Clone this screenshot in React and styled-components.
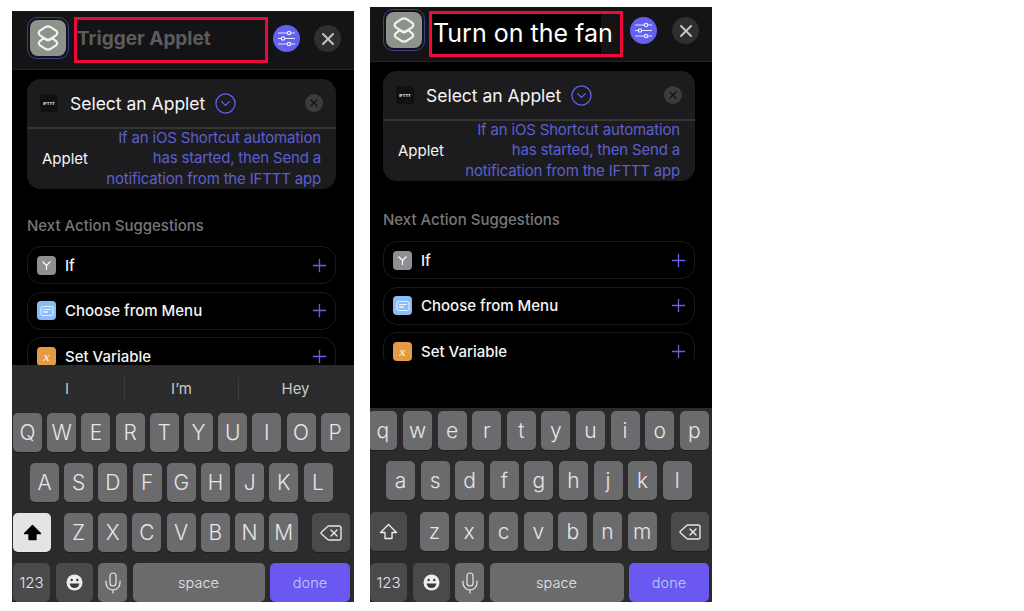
import styled, { createGlobalStyle } from "styled-components"
import { CircleChevronDown, Delete, Mic, Plus, X } from "lucide-react"

const GlobalStyle = createGlobalStyle`
    html, body {
        margin: 0;
        padding: 0;
        background: #fff;
        font-family: Inter, "Liberation Sans", sans-serif;
    }
`

const colors = {
    accent: "#6361ec",
    link: "#5d5fd0",
    header: "#141416",
    card: "#1c1c1e",
    keyboard: "#2b2b2d",
    key: "#6b6b6d",
    keyDark: "#4a4a4c",
}

const Page = styled.div`
    display: flex;
    align-items: flex-start;
    width: 1024px;
    height: 611px;
    overflow: hidden;
    padding-left: 12px;
    box-sizing: border-box;
`

const Phone = styled.div`
    display: flex;
    flex-direction: column;
    flex: none;
    width: 342px;
    height: ${(p) => p.$height}px;
    margin-top: ${(p) => p.$top}px;
    margin-left: ${(p) => p.$left}px;
    background: #000;
    overflow: hidden;
`

const Header = styled.div`
    display: flex;
    align-items: center;
    flex: none;
    height: ${(p) => p.$height}px;
    padding-left: ${(p) => p.$pad}px;
    background: ${colors.header};
    border-bottom: 1px solid #232325;
    box-sizing: border-box;
`

const AppIcon = styled.div`
    display: flex;
    align-items: center;
    justify-content: center;
    flex: none;
    width: 42px;
    height: 42px;
    margin-top: ${(p) => p.$shift}px;
    border: 1px solid #3f3f8f;
    border-radius: 10px;
    box-sizing: border-box;
    padding: 2px;
`

const AppIconFace = styled.div`
    display: flex;
    align-items: center;
    justify-content: center;
    width: 100%;
    height: 100%;
    background: #8d928b;
    border-radius: 8px;
`

const TitleBox = styled.div`
    display: flex;
    align-items: center;
    flex: none;
    width: 194px;
    height: 46px;
    margin-left: ${(p) => p.$gap}px;
    padding-left: ${(p) => (p.$filled ? 1 : 0)}px;
    padding-bottom: ${(p) => (p.$filled ? 2 : 4)}px;
    border: 3.5px solid #ee0a3c;
    box-sizing: border-box;
    background: ${(p) => (p.$filled ? "linear-gradient(90deg, #000 169px, #141416 169px)" : "#141416")};
    color: ${(p) => (p.$filled ? "#fff" : "#5c5c5f")};
    font-size: ${(p) => (p.$filled ? 25 : 19)}px;
    font-weight: ${(p) => (p.$filled ? 400 : 700)};
    white-space: nowrap;
`

const RoundButton = styled.div`
    display: flex;
    align-items: center;
    justify-content: center;
    flex: none;
    width: 27px;
    height: 27px;
    margin-left: ${(p) => p.$gap}px;
    margin-top: ${(p) => p.$shift}px;
    border-radius: 50%;
    background: ${(p) => (p.$primary ? "#6461f0" : "#2f2f31")};
    color: #c5c5c5;
`

const Content = styled.div`
    flex: none;
    height: ${(p) => p.$height}px;
    padding: 9px ${(p) => p.$right}px 0 ${(p) => p.$left}px;
    box-sizing: border-box;
    overflow: hidden;
`

const Filler = styled.div`
    flex: 1;
`

const Card = styled.div`
    height: 110px;
    background: ${colors.card};
    border-radius: 14px;
    overflow: hidden;
`

const CardTop = styled.div`
    display: flex;
    align-items: center;
    height: 50px;
    padding: 0 13px;
    box-sizing: border-box;
    border-bottom: 2px solid #363638;
`

const IftttBadge = styled.div`
    display: flex;
    align-items: center;
    justify-content: center;
    flex: none;
    width: 18px;
    height: 18px;
    border-radius: 3px;
    background: #111;
    color: #e8e8e8;
    font-size: 4px;
    font-weight: 800;
`

const CardTitle = styled.span`
    margin: 0 9px 0 12px;
    color: #f5f5f5;
    font-size: 17.5px;
`

const ClearButton = styled.div`
    display: flex;
    align-items: center;
    justify-content: center;
    width: 18px;
    height: 18px;
    margin-left: auto;
    border-radius: 50%;
    background: #3c3c3e;
    color: #141414;
`

const CardBody = styled.div`
    display: flex;
    align-items: center;
    justify-content: space-between;
    padding: 0 15px 0 15px;
    height: 59px;
`

const FieldLabel = styled.span`
    color: #f5f5f5;
    font-size: 15px;
`

const FieldValue = styled.div`
    color: ${colors.link};
    font-size: 15px;
    letter-spacing: -0.18px;
    line-height: 20.5px;
    text-align: right;
    white-space: nowrap;
`

const SectionLabel = styled.div`
    margin: ${(p) => p.$gap}px 0 ${(p) => p.$below}px;
    color: #77777b;
    font-size: 15px;
    font-weight: 500;
    line-height: 18px;
`

const Row = styled.div`
    display: flex;
    align-items: center;
    height: 38px;
    margin-bottom: 7.6px;
    padding: 0 5px 0 9px;
    border: 1px solid #1b1b1d;
    border-radius: 14px;
    color: #f5f5f5;
    font-size: 15px;
    font-weight: 500;
    box-sizing: border-box;
`

const RowIcon = styled.div`
    display: flex;
    align-items: center;
    justify-content: center;
    flex: none;
    width: 19px;
    height: 19px;
    margin-right: 9px;
    border-radius: 4px;
    background: ${(p) => p.$color};
    color: #fff;
`

const VarGlyph = styled.span`
    font-family: "Liberation Serif", serif;
    font-style: italic;
    font-weight: 700;
    font-size: 13px;
    line-height: 1;
    color: #fbe7c8;
`

const RowPlus = styled.div`
    display: flex;
    margin-left: auto;
    color: ${colors.accent};
`

const Keyboard = styled.div`
    display: flex;
    flex: none;
    flex-direction: column;
    height: ${(p) => p.$height}px;
    background: ${colors.keyboard};
`

const Suggestions = styled.div`
    display: flex;
    align-items: flex-end;
    height: 35px;
    margin: 0 0 13px -2px;
`

const Suggestion = styled.div`
    flex: none;
    width: 114px;
    height: 23px;
    box-sizing: border-box;
    color: #c9c9c9;
    font-size: 15px;
    line-height: 23px;
    text-align: center;
    & + & {
        border-left: 1px solid #3c3c3e;
    }
`

const KeyRow = styled.div`
    display: flex;
    gap: ${(p) => p.$gap}px;
    height: 39px;
    margin-left: ${(p) => p.$left}px;
    margin-top: ${(p) => p.$top || 0}px;
`

const LetterGroup = styled.div`
    display: flex;
    gap: ${(p) => p.$gap}px;
    margin: 0 ${(p) => p.$right}px 0 ${(p) => p.$left}px;
`

const Key = styled.div`
    display: flex;
    align-items: center;
    justify-content: center;
    flex: none;
    width: ${(p) => p.$width || 29}px;
    height: 39px;
    border-radius: 5px;
    background: ${(p) => p.$bg || colors.key};
    color: ${(p) => p.$fg || "#e6e6e6"};
    font-size: ${(p) => p.$size || 21}px;
    font-weight: 300;
    box-shadow: 0 1px 0 rgba(0, 0, 0, 0.3);
`

const LayersIcon = () => (
    <svg width="30" height="30" viewBox="0 0 30 30" fill="none" stroke="#f2f2f2" strokeWidth="2.2" strokeLinejoin="round">
        <path d="M15 17.5 L19.6 15.3 L23.2 18.3 C24.6 19.6 24.6 21 23 22.3 L18 25.6 C16 26.9 14 26.9 12 25.6 L7 22.3 C5.4 21 5.4 19.6 6.8 18.3 L10.4 15.3 Z" />
        <path d="M12 4.4 C14 3.1 16 3.1 18 4.4 L23 7.7 C24.8 9 24.8 11 23 12.3 L18 15.6 C16 16.9 14 16.9 12 15.6 L7 12.3 C5.2 11 5.2 9 7 7.7 Z" />
    </svg>
)

const SlidersIcon = () => (
    <svg width="19" height="17" viewBox="0 0 19 17" fill="none" stroke="#e8e8ff" strokeWidth="1.2">
        <path d="M1 3 H18 M1 8.5 H18 M1 14 H18" />
        <circle cx="12" cy="3" r="1.7" fill="#6461f0" />
        <circle cx="6" cy="8.5" r="1.7" fill="#6461f0" />
        <circle cx="12" cy="14" r="1.7" fill="#6461f0" />
    </svg>
)

const BranchIcon = () => (
    <svg width="13" height="13" viewBox="0 0 13 13" fill="none" stroke="#fff" strokeWidth="1.2">
        <path d="M2.5 2.5 L6.5 6.5 L10.5 2.5 M6.5 6.5 V11" />
    </svg>
)

const MenuIcon = () => (
    <svg width="14" height="12" viewBox="0 0 14 12" fill="none" stroke="#e6f1ff" strokeWidth="1">
        <rect x="1" y="1.5" width="12" height="9" rx="1.5" />
        <path d="M3 4.5 H11" />
        <path d="M3 7 H8" strokeWidth="1.6" />
    </svg>
)

const ShiftIcon = ({ filled }) => (
    <svg width="19" height="17" viewBox="0 0 19 17" fill={filled ? "#000" : "none"} stroke={filled ? "#000" : "#f0f0f0"} strokeWidth="1.3" strokeLinejoin="round">
        <path d="M9.5 1.5 L17.5 9.5 H13 V15.5 H6 V9.5 H1.5 Z" />
    </svg>
)

const EmojiIcon = () => (
    <svg width="17" height="17" viewBox="0 0 17 17">
        <circle cx="8.5" cy="8.5" r="8" fill="#ededed" />
        <circle cx="5.7" cy="6" r="1.2" fill="#3a3a3c" />
        <circle cx="11.3" cy="6" r="1.2" fill="#3a3a3c" />
        <path d="M3.6 9.4 H13.4 C13 12.4 11 14 8.5 14 C6 14 4 12.4 3.6 9.4 Z" fill="#3a3a3c" />
    </svg>
)

const rows = [
    { name: "If", color: "#8e8e93", icon: <BranchIcon /> },
    { name: "Choose from Menu", color: "#8cbcf7", icon: <MenuIcon /> },
    { name: "Set Variable", color: "#e59a45", icon: <VarGlyph>x</VarGlyph> },
]

const upper = ["QWERTYUIOP", "ASDFGHJKL", "ZXCVBNM"]
const lower = ["qwertyuiop", "asdfghjkl", "zxcvbnm"]

const Letters = ({ keys }) => keys.split("").map((k) => <Key key={k}>{k}</Key>)

const ShortcutScreen = ({ m, title, filled, letters }) => (
    <Phone $height={m.height} $top={m.top} $left={m.left}>
        <Header $height={m.headerH} $pad={m.headerPad}>
            <AppIcon $shift={m.iconShift}>
                <AppIconFace>
                    <LayersIcon />
                </AppIconFace>
            </AppIcon>
            <TitleBox $gap={m.titleGap} $filled={filled}>{title}</TitleBox>
            <RoundButton $primary $gap={m.sliderGap} $shift={m.buttonShift}>
                <SlidersIcon />
            </RoundButton>
            <RoundButton $gap={m.closeGap} $shift={m.buttonShift}>
                <X size={20} strokeWidth={2.4} />
            </RoundButton>
        </Header>
        <Content $height={m.contentH} $left={m.contentLeft} $right={m.contentRight}>
            <Card>
                <CardTop>
                    <IftttBadge>IFTTT</IftttBadge>
                    <CardTitle>Select an Applet</CardTitle>
                    <CircleChevronDown size={23} strokeWidth={1.3} color={colors.accent} />
                    <ClearButton>
                        <X size={12} strokeWidth={2.4} />
                    </ClearButton>
                </CardTop>
                <CardBody>
                    <FieldLabel>Applet</FieldLabel>
                    <FieldValue>
                        If an iOS Shortcut automation
                        <br />
                        has started, then Send a
                        <br />
                        notification from the IFTTT app
                    </FieldValue>
                </CardBody>
            </Card>
            <SectionLabel $gap={m.sectionGap} $below={m.labelBelow}>Next Action Suggestions</SectionLabel>
            {rows.map((row) => (
                <Row key={row.name}>
                    <RowIcon $color={row.color}>{row.icon}</RowIcon>
                    {row.name}
                    <RowPlus>
                        <Plus size={21} strokeWidth={1.5} />
                    </RowPlus>
                </Row>
            ))}
        </Content>
        <Filler />
        <Keyboard $height={m.keyboardH}>
            {m.suggest ? (
                <Suggestions>
                    <Suggestion>I</Suggestion>
                    <Suggestion>I’m</Suggestion>
                    <Suggestion>Hey</Suggestion>
                </Suggestions>
            ) : null}
            <KeyRow $gap={m.keyGap} $left={m.row1} $top={m.suggest ? 0 : 3}>
                <Letters keys={letters[0]} />
            </KeyRow>
            <KeyRow $gap={m.keyGap} $left={m.row2} $top={11}>
                <Letters keys={letters[1]} />
            </KeyRow>
            <KeyRow $gap={0} $left={m.row3} $top={m.lowerTop}>
                <Key $width={m.shiftW} $bg={filled ? colors.keyDark : "#e4e4e4"}>
                    <ShiftIcon filled={!filled} />
                </Key>
                <LetterGroup $gap={m.keyGap} $left={13} $right={m.delGap}>
                    <Letters keys={letters[2]} />
                </LetterGroup>
                <Key $width={38} $bg={colors.keyDark}>
                    <Delete size={24} strokeWidth={1.4} />
                </Key>
            </KeyRow>
            <KeyRow $gap={5.5} $left={m.row3} $top={m.lowerTop}>
                <Key $width={37} $bg={colors.keyDark} $size={15}>123</Key>
                <Key $width={37} $bg={colors.keyDark}>
                    <EmojiIcon />
                </Key>
                <Key $bg={colors.key}>
                    <Mic size={24} strokeWidth={1.2} />
                </Key>
                <Key $width={m.spaceW} $size={14.5}>space</Key>
                <Key $width={80} $bg="#6a58f0" $fg="#bcd0f8" $size={14.5}>done</Key>
            </KeyRow>
        </Keyboard>
    </Phone>
)

const leftScreen = {
    height: 591,
    top: 11,
    left: 0,
    headerH: 59,
    headerPad: 15,
    iconShift: -4,
    buttonShift: -3,
    titleGap: 5,
    sliderGap: 5,
    closeGap: 14,
    contentH: 295,
    contentLeft: 15,
    contentRight: 18,
    sectionGap: 28,
    labelBelow: 11,
    keyGap: 5.2,
    keyboardH: 237,
    suggest: true,
    row1: 1,
    row2: 18,
    row3: 1,
    lowerTop: 11,
    shiftW: 38,
    delGap: 14,
    spaceW: 132,
}

const rightScreen = {
    height: 595,
    top: 7,
    left: 16,
    headerH: 55,
    headerPad: 13,
    iconShift: -9,
    buttonShift: -7,
    titleGap: 4,
    sliderGap: 7,
    closeGap: 15,
    contentH: 299,
    contentLeft: 13,
    contentRight: 17,
    sectionGap: 30,
    labelBelow: 12,
    keyGap: 5.6,
    keyboardH: 194,
    suggest: false,
    row1: -1.6,
    row2: 16,
    row3: 0,
    lowerTop: 12,
    shiftW: 37,
    delGap: 14,
    spaceW: 134,
}

const App = () => (
    <Page>
        <GlobalStyle />
        <ShortcutScreen m={leftScreen} title="Trigger Applet" letters={upper} />
        <ShortcutScreen m={rightScreen} title="Turn on the fan" filled letters={lower} />
    </Page>
)

export default App
